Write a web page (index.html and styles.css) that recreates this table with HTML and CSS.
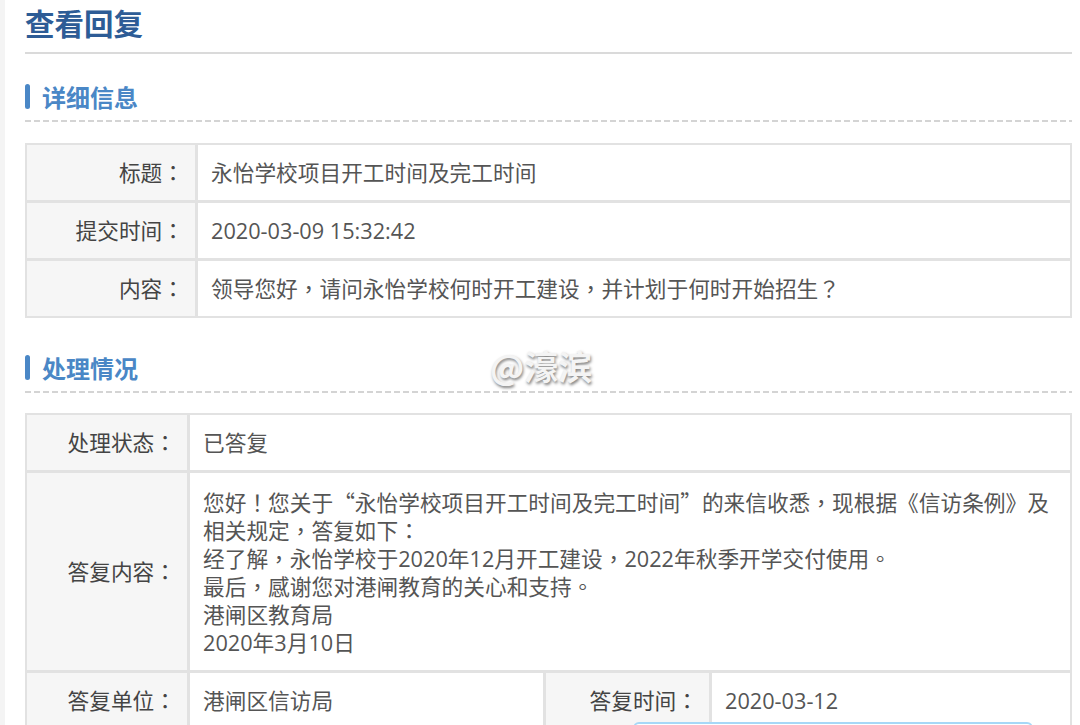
FILE: index.html
```html
<!DOCTYPE html>
<html lang="zh-CN">
<head>
    <meta charset="UTF-8">
    <title>查看回复</title>
    <link rel="stylesheet" href="styles.css">
</head>
<body>

<div class="page">
    <h1 class="page-title">查看回复</h1>

    <h2 class="section-title">详细信息</h2>
    <div class="info-table" lang="zh-Hant">
        <div class="cell label">标题：</div>
        <div class="cell value">永怡学校项目开工时间及完工时间</div>
        <div class="cell label">提交时间：</div>
        <div class="cell value">2020-03-09 15:32:42</div>
        <div class="cell label">内容：</div>
        <div class="cell value">领导您好，请问永怡学校何时开工建设，并计划于何时开始招生？</div>
    </div>

    <h2 class="section-title">处理情况</h2>
    <div class="reply-table" lang="zh-Hant">
        <div class="cell label">处理状态：</div>
        <div class="cell value wide">已答复</div>
        <div class="cell label">答复内容：</div>
        <div class="cell value wide multi">您好！您关于<span class="cjk">“</span>永怡学校项目开工时间及完工时间<span class="cjk">”</span>的来信收悉，现根据《信访条例》及相关规定，答复如下：<br>经了解，永怡学校于2020年12月开工建设，2022年秋季开学交付使用。<br>最后，感谢您对港闸教育的关心和支持。<br>港闸区教育局<br>2020年3月10日</div>
        <div class="cell label">答复单位：</div>
        <div class="cell value">港闸区信访局</div>
        <div class="cell label">答复时间：</div>
        <div class="cell value">2020-03-12</div>
    </div>
</div>

<div class="watermark">@濠滨</div>
<div class="popup"></div>

</body>
</html>
```

FILE: styles.css
```css
body {
    margin: 0;
    padding: 0;
    background: #fff;
    font-family: 'Open Sans', 'Noto Sans CJK TC', sans-serif;
    color: #555;
    text-spacing-trim: space-all;
}

.page {
    min-height: 725px;
    box-sizing: border-box;
    border-left: 5px solid #f4f4f4;
    padding: 0 8px 0 20px;
}

.page-title {
    margin: 0;
    padding: 4px 0 12px;
    font-family: 'Noto Sans CJK SC', sans-serif;
    font-size: 29.5px;
    line-height: 36px;
    font-weight: bold;
    color: #2d5c96;
    border-bottom: 2px solid #dadada;
}

.section-title {
    position: relative;
    margin: 28px 0 0;
    padding: 0 0 10px 17px;
    font-family: 'Noto Sans CJK SC', sans-serif;
    font-size: 24px;
    line-height: 30px;
    font-weight: bold;
    color: #4a87c6;
    background: repeating-linear-gradient(to right, #d4d4d4 0 6px, transparent 6px 9px) left bottom / 100% 2px no-repeat;
}

.section-title::before {
    content: '';
    position: absolute;
    left: 0;
    top: 2px;
    width: 5px;
    height: 25px;
    border-radius: 3px;
    background: #4a87c6;
}

.info-table + .section-title {
    margin-top: 35px;
}

.info-table,
.reply-table {
    display: grid;
    gap: 3px;
    padding: 2px;
    margin-top: 21px;
    background: #e2e2e2;
    font-size: 21.7px;
}

.info-table {
    grid-template-columns: 168px 1fr;
}

.reply-table {
    margin-top: 20px;
    grid-template-columns: 160px 353px 163px 1fr;
}

.cell {
    line-height: 29px;
    padding: 13px 13px;
}

.label {
    background: #f6f6f6;
    color: #444;
    text-align: right;
    padding-right: 11px;
    display: flex;
    align-items: center;
    justify-content: flex-end;
}

.value {
    background: #fff;
    color: #555;
}

.wide {
    grid-column: span 3;
}

.multi {
    line-height: 28px;
    padding: 15px 6px 13px 13px;
}

.cjk {
    font-family: 'Noto Sans CJK TC', sans-serif;
}

.watermark {
    position: absolute;
    left: 490px;
    top: 341px;
    font-family: 'Noto Sans CJK SC', sans-serif;
    font-size: 34px;
    font-weight: bold;
    color: #f4f4f4;
    text-shadow: 1px 2px 3px rgba(0, 0, 0, 0.5);
}

.popup {
    position: absolute;
    left: 633px;
    top: 722px;
    width: 396px;
    height: 60px;
    border: 2px solid #a6d8f7;
    border-radius: 6px;
    background: #fff;
}
```
